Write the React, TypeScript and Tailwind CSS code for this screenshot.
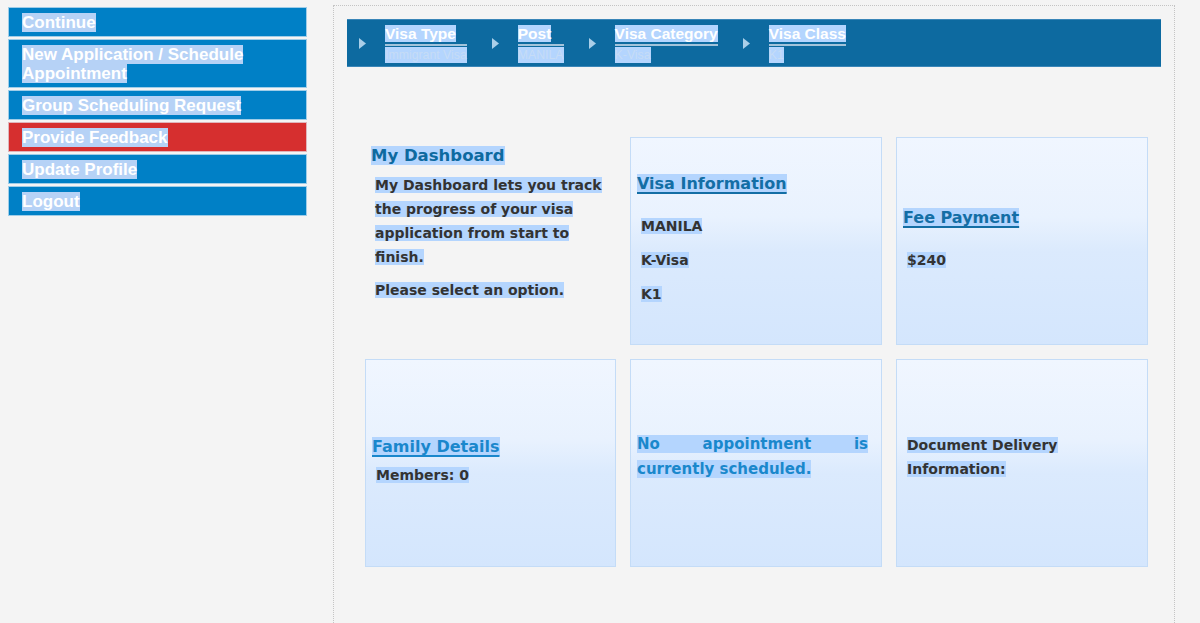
import React from "react";

const HL = "bg-[#b4d5fe]";

function SideItem({ label, red }: { label: React.ReactNode; red?: boolean }) {
  return (
    <div
      className={`${red ? "bg-[#d62f2f]" : "bg-[#0080c6]"} border border-[#e3eef7]/70 pl-[13px] pr-2 pt-[5px] pb-[4px] leading-[19px] text-[17px] font-bold text-white`}
    >
      <span className="bg-[#b6d2f6] box-decoration-clone">{label}</span>
    </div>
  );
}

function Crumb({ label, value }: { label: string; value: string }) {
  return (
    <div className="flex items-center">
      <svg width="7" height="11" viewBox="0 0 7 11" className="mr-[19px] shrink-0">
        <polygon points="0,0 7,5.5 0,11" fill="#a9cfe9" />
      </svg>
      <div className="flex flex-col mr-[25px]">
        <div className="border-b-2 border-[#a3c3da] leading-[20px] text-[15.5px] font-bold text-white whitespace-nowrap">
          <span className="bg-[#b4d5fe]">{label}</span>
        </div>
        <div className="mt-[1px] h-[16px] leading-[16px] text-[12.3px] text-[#c6dcf6] whitespace-nowrap">
          <span className="bg-[#b4d5fe] inline-block h-[16px]">{value}</span>
        </div>
      </div>
    </div>
  );
}

const card =
  "border border-[#c4dcf7] bg-[linear-gradient(to_bottom,#f0f6ff_0%,#e9f2fe_38%,#dbeafd_55%,#d4e6fd_100%)] flex flex-col justify-center";

export default function App() {
  return (
    <div className="h-[623px] overflow-hidden bg-[#f4f4f4] flex items-start pl-2 pt-[5px] font-['Liberation_Sans',Arial,sans-serif]">
      <div className="w-[299px] mt-[2px] flex flex-col gap-[2px] shrink-0">
        <SideItem label="Continue" />
        <SideItem label={<>New Application / Schedule<br />Appointment</>} />
        <SideItem label="Group Scheduling Request" />
        <SideItem label="Provide Feedback" red />
        <SideItem label="Update Profile" />
        <SideItem label="Logout" />
      </div>

      <div className="ml-[26px] w-[842px] h-[700px] shrink-0 border border-dotted border-[#c4c4c4] p-[13px]">
        <div className="h-[48px] bg-[#0d6aa0] border-y border-[#3a86b8] flex items-center pl-[12px]">
          <Crumb label="Visa Type" value="Immigrant Visa" />
          <Crumb label="Post" value="MANILA" />
          <Crumb label="Visa Category" value="K-Visa" />
          <Crumb label="Visa Class" value="K1" />
        </div>

        <div className="mt-[70px] ml-[18px] grid grid-cols-[251px_252px_252px] grid-rows-[208px_208px] gap-[14px] font-['DejaVu_Sans',Verdana,sans-serif] font-bold text-[14px] text-[#333]">
          <div className="pl-[6px] pt-[8px]">
            <div className="text-[16.5px] leading-[21px] text-[#0e6aa0]">
              <span className={HL}>My Dashboard</span>
            </div>
            <div className="pl-[4px] mt-[7px] w-[232px] leading-[24px]">
              <p><span className={HL}>My Dashboard lets you track the progress of your visa application from start to finish.</span></p>
              <p className="mt-[9px]"><span className={HL}>Please select an option.</span></p>
            </div>
          </div>

          <div className={`${card} pl-[6px] pb-[5px]`}>
            <div className="text-[16px] leading-[22px] text-[#136ea5] underline decoration-[1.5px] underline-offset-[3px]">
              <span className={HL}>Visa Information</span>
            </div>
            <div className="pl-[4px] mt-[21px] leading-[20px] flex flex-col gap-[14px]">
              <p><span className={HL}>MANILA</span></p>
              <p><span className={HL}>K-Visa</span></p>
              <p><span className={HL}>K1</span></p>
            </div>
          </div>

          <div className={`${card} pl-[6px] pb-[5px]`}>
            <div className="text-[16px] leading-[22px] text-[#136ea5] underline decoration-[1.5px] underline-offset-[3px]">
              <span className={HL}>Fee Payment</span>
            </div>
            <div className="pl-[4px] mt-[21px] leading-[20px]">
              <p><span className={HL}>$240</span></p>
            </div>
          </div>

          <div className={`${card} pl-[6px] pb-[5px]`}>
            <div className="text-[16px] leading-[22px] text-[#1a87cc] underline decoration-[1.5px] underline-offset-[3px]">
              <span className={HL}>Family Details</span>
            </div>
            <div className="pl-[4px] mt-[7px] leading-[20px]">
              <p><span className={HL}>Members: 0</span></p>
            </div>
          </div>

          <div className={`${card} pl-[6px] pr-[13px] pb-[12px]`}>
            <p className="text-[15px] leading-[25px] text-[#1a88cc] text-justify">
              <span className={HL}>No appointment is currently scheduled.</span>
            </p>
          </div>

          <div className={`${card} pl-[10px] pr-[12px] pb-[12px]`}>
            <p className="leading-[24px] w-[160px]">
              <span className={HL}>Document Delivery Information:</span>
            </p>
          </div>
        </div>
      </div>
    </div>
  );
}
